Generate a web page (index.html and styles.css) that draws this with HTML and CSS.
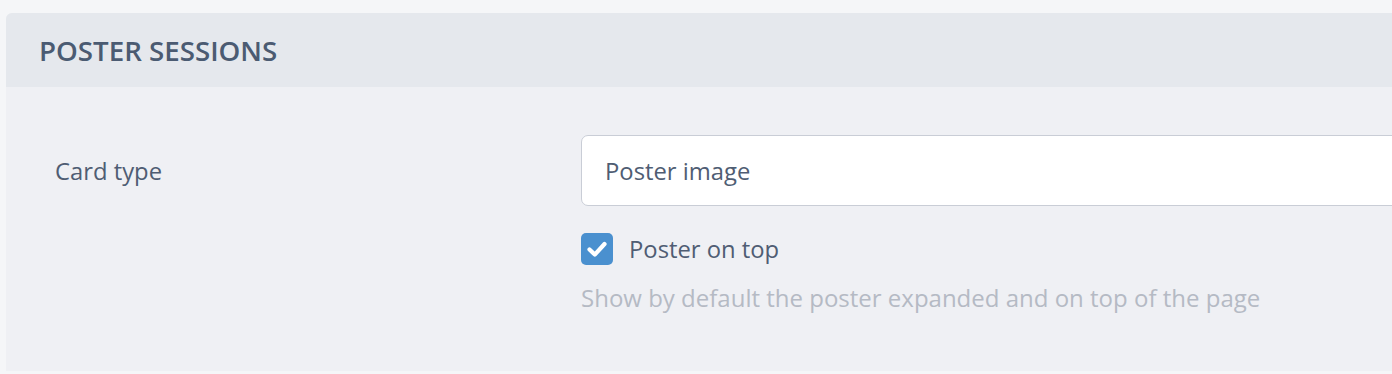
FILE: index.html
```html
<!DOCTYPE html>
<html lang="en">
<head>
<meta charset="utf-8">
<title>Poster sessions</title>
<link rel="stylesheet" href="styles.css">
</head>
<body>
<section class="card">
  <header class="card-header">
    <h2 class="card-title">POSTER SESSIONS</h2>
  </header>
  <div class="card-body">
    <div class="field-row">
      <label class="field-label" for="card-type">Card type</label>
      <div class="field-control">
        <div class="select-box" id="card-type">Poster image</div>
        <label class="check-row">
          <span class="checkbox">
            <svg viewBox="0 0 32 32" width="32" height="32" aria-hidden="true">
              <path d="M8.5 16.5 L13.8 21.6 L23.5 11" fill="none" stroke="#fff" stroke-width="4.2" stroke-linecap="round" stroke-linejoin="round"/>
            </svg>
          </span>
          <span class="check-text">Poster on top</span>
        </label>
        <p class="help-text">Show by default the poster expanded and on top of the page</p>
      </div>
    </div>
  </div>
</section>
</body>
</html>
```

FILE: styles.css
```css
html, body {
  margin: 0;
  padding: 0;
}
body {
  background: #f5f6f8;
  font-family: "Open Sans", "Noto Sans", sans-serif;
  overflow: hidden;
  padding-top: 13px;
  padding-left: 6px;
}
.card {
  margin-right: -40px;
  border-radius: 6px 0 0 0;
  overflow: hidden;
  background: #eff0f4;
}
.card-header {
  background: #e5e8ed;
  height: 74px;
  display: flex;
  align-items: center;
  padding-left: 33px;
}
.card-title {
  margin: 0;
  font-size: 27.7px;
  font-weight: 600;
  color: #4b5b72;
}
.card-body {
  height: 284px;
  padding: 48px 0 0 49px;
  box-sizing: border-box;
}
.field-row {
  display: grid;
  grid-template-columns: 526px 1fr;
}
.field-label {
  font-size: 23.8px;
  color: #4f5d73;
  line-height: 73px;
}
.field-control {
  display: flex;
  flex-direction: column;
}
.select-box {
  height: 71px;
  box-sizing: border-box;
  border: 1.5px solid #c9cdd6;
  border-radius: 7px;
  background: #fff;
  font-size: 23.8px;
  color: #4f5d73;
  display: flex;
  align-items: center;
  padding-left: 23px;
}
.check-row {
  display: flex;
  align-items: center;
  gap: 16px;
  margin-top: 27px;
}
.checkbox {
  width: 32px;
  height: 32px;
  border-radius: 5px;
  background: #4a90cf;
  display: flex;
}
.check-text {
  font-size: 23.8px;
  color: #4f5d73;
}
.help-text {
  margin: 16px 0 0;
  font-size: 24px;
  color: #b5bac4;
}
```
